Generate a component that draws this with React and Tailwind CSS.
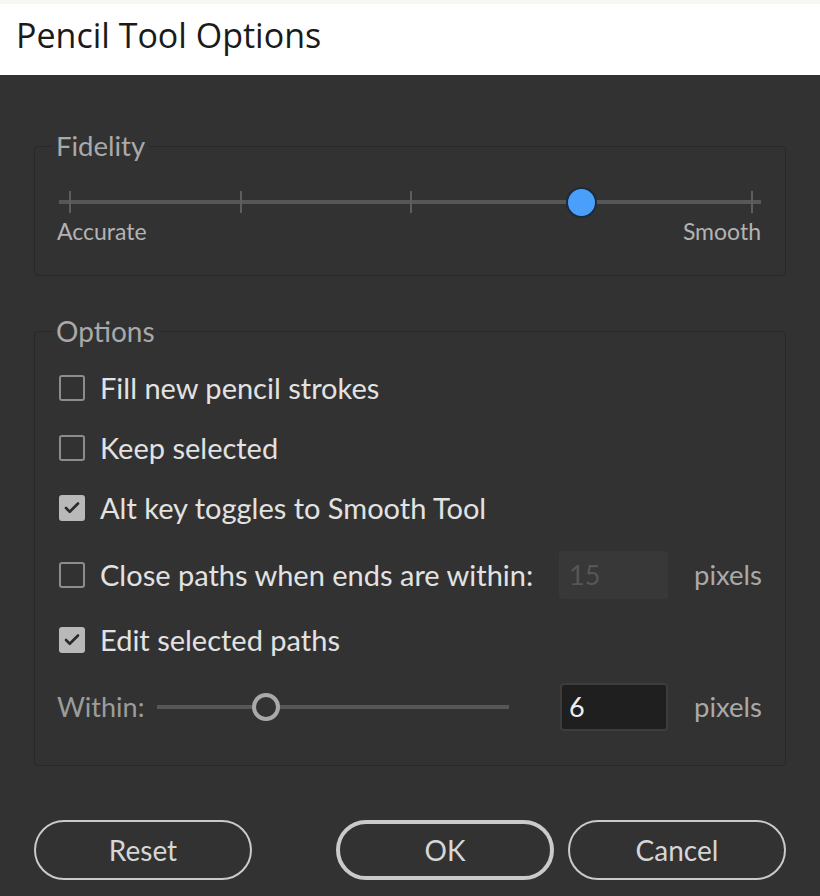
import { Check } from 'lucide-react'

const font = { fontFamily: 'Lato, "Open Sans", sans-serif' }

function CheckBox({ checked }) {
  return checked ? (
    <span className="flex h-[26px] w-[26px] flex-none items-center justify-center rounded-[3px] bg-[#b9b9b9]">
      <Check size={18} strokeWidth={3.5} className="text-[#2b2b2b]" />
    </span>
  ) : (
    <span className="h-[26px] w-[26px] flex-none rounded-[3px] border-2 border-[#8c8c8c]" />
  )
}

function OptionRow({ checked, label, className = '' }) {
  return (
    <div className={`flex h-[40px] items-center gap-[15px] ${className}`}>
      <CheckBox checked={checked} />
      <span className="text-[29px] text-[#e2e2e2]">{label}</span>
    </div>
  )
}

function FidelitySlider() {
  const ticks = [11, 181.5, 352, 522.5, 693]
  return (
    <div className="relative h-[30px] w-full">
      <div className="absolute left-0 right-0 top-[13px] h-[4px] bg-[#575757]" />
      {ticks.map((t) => (
        <div key={t} className="absolute top-[4px] h-[22px] w-[2px] bg-[#5e5e5e]" style={{ left: t - 1 }} />
      ))}
      <div className="absolute top-0 h-[31px] w-[31px] rounded-full border-2 border-[#1b2a3c] bg-[#4a9ffa]" style={{ left: 522.5 - 15.5 }} />
    </div>
  )
}

export default function App() {
  return (
    <div className="flex h-[896px] w-[820px] flex-col overflow-hidden bg-[#323232]" style={font}>
      <div className="flex h-[75px] flex-none items-center border-t-4 border-[#f6f6f3] bg-white pb-[8px] pl-[16px]">
        <span className="text-[34px] text-[#1a1a1a]" style={{ fontFamily: '"Open Sans", sans-serif' }}>
          Pencil Tool Options
        </span>
      </div>

      <div className="flex flex-1 flex-col px-[34px] pt-[57px]">
        <fieldset className="rounded-[4px] border border-[#282828] px-[24px] pb-[32px] pt-[27px]">
          <legend className="-ml-[7px] px-[4px] text-[27.5px] leading-[28px] text-[#a9a9a9]">Fidelity</legend>
          <FidelitySlider />
          <div className="mt-[2px] flex justify-between text-[23px] leading-[24px] text-[#b3b3b3]">
            <span className="-ml-[2px]">Accurate</span>
            <span>Smooth</span>
          </div>
        </fieldset>

        <fieldset className="mt-[41px] rounded-[4px] border border-[#282828] pb-[34px] pl-[24px] pr-[23px] pt-[23px]">
          <legend className="-ml-[7px] px-[4px] text-[28px] leading-[28px] text-[#a9a9a9]">Options</legend>
          <OptionRow label="Fill new pencil strokes" />
          <OptionRow label="Keep selected" className="mt-[20px]" />
          <OptionRow checked label="Alt key toggles to Smooth Tool" className="mt-[20px]" />
          <div className="mt-[23px] flex h-[48px] items-center">
            <div className="flex items-center gap-[15px]">
              <CheckBox />
              <span className="text-[29px] text-[#e2e2e2]">Close paths when ends are within:</span>
            </div>
            <div className="flex-1" />
            <div className="flex h-[48px] w-[109px] items-center rounded-[3px] bg-[#383838] pl-[10px] text-[27px] text-[#565656]">15</div>
            <span className="ml-[26px] text-[27.5px] text-[#a9a9a9]">pixels</span>
          </div>
          <OptionRow checked label="Edit selected paths" className="mt-[21px]" />
          <div className="mt-[23px] flex h-[48px] items-center">
            <span className="-ml-[2px] text-[27px] text-[#9c9c9c]">Within:</span>
            <div className="relative ml-[13px] h-[30px] w-[352px] flex-none">
              <div className="absolute left-0 right-0 top-[13px] h-[4px] bg-[#575757]" />
              <div className="absolute left-[95px] top-[1px] h-[28px] w-[28px] rounded-full border-[4px] border-[#a9a9a9] bg-[#323232]" />
            </div>
            <div className="flex-1" />
            <div className="flex h-[48px] w-[108px] items-center rounded-[4px] border-2 border-[#3c3c3c] bg-[#1f1f1f] pl-[7px] text-[27px] text-[#eeeeee]">6</div>
            <span className="ml-[26px] text-[27.5px] text-[#a9a9a9]">pixels</span>
          </div>
        </fieldset>

        <div className="mt-[54px] flex">
          <button className="flex h-[60px] w-[218px] items-center justify-center rounded-full border-2 border-[#cacaca] text-[28px] text-[#d6d6d6]">Reset</button>
          <div className="flex-1" />
          <button className="flex h-[60px] w-[218px] items-center justify-center rounded-full border-4 border-[#cacaca] text-[28px] text-[#d6d6d6]">OK</button>
          <button className="ml-[14px] flex h-[60px] w-[218px] items-center justify-center rounded-full border-2 border-[#cacaca] text-[28px] text-[#d6d6d6]">Cancel</button>
        </div>
      </div>
    </div>
  )
}
